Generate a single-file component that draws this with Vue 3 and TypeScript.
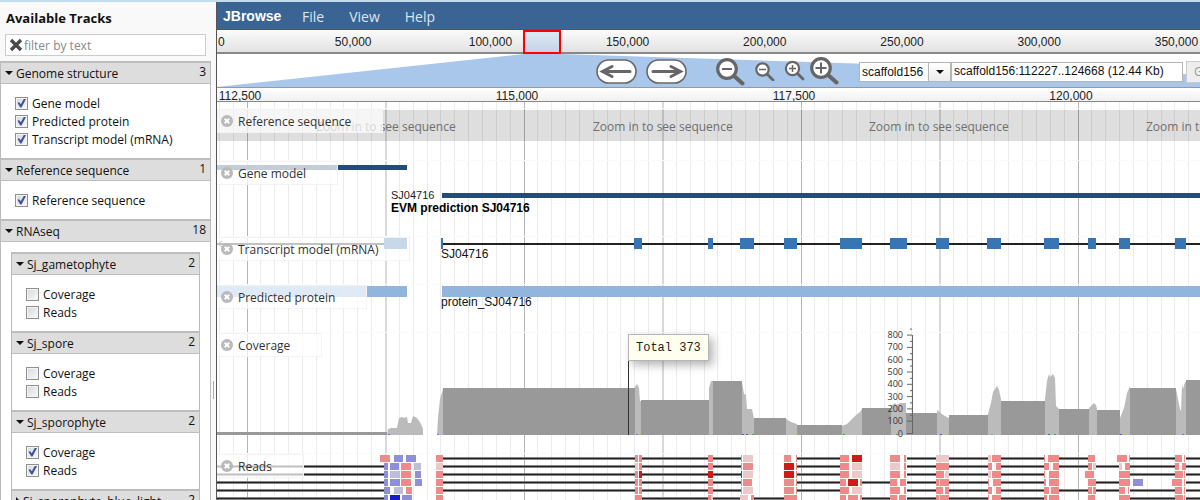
<script setup lang="ts">
import { reactive, ref } from 'vue'

interface TrackItem { name: string; on: boolean }
interface Category { name: string; count: number; open: boolean; items: TrackItem[]; children: Category[] }

const cat = (name: string, count: number, items: TrackItem[], children: Category[] = [], open = true): Category =>
  ({ name, count, open, items, children })

const categories = reactive<Category[]>([
  cat('Genome structure', 3, [
    { name: 'Gene model', on: true },
    { name: 'Predicted protein', on: true },
    { name: 'Transcript model (mRNA)', on: true },
  ]),
  cat('Reference sequence', 1, [{ name: 'Reference sequence', on: true }]),
  cat('RNAseq', 18, [], [
    cat('Sj_gametophyte', 2, [{ name: 'Coverage', on: false }, { name: 'Reads', on: false }]),
    cat('Sj_spore', 2, [{ name: 'Coverage', on: false }, { name: 'Reads', on: false }]),
    cat('Sj_sporophyte', 2, [{ name: 'Coverage', on: true }, { name: 'Reads', on: true }]),
    cat('Sj_sporophyte_blue_light', 2, [], [], false),
  ]),
])

const filterText = ref('')
const refSeq = ref('scaffold156')
const location = ref('scaffold156:112227..124668 (12.44 Kb)')

const overviewTicks = Array.from({ length: 11 }, (_, i) => ({
  x: i * 137.2 - 1,
  label: (i * 50000).toLocaleString('en-US'),
}))
const rulerTicks = Array.from({ length: 7 }, (_, i) => ({
  x: 23 + i * 277,
  label: (112500 + i * 2500).toLocaleString('en-US'),
}))

const gridLines = Array.from({ length: 130 }, (_, i) => {
  const n = i - 2
  const kind = n % 20 === 0 ? 'major' : n % 10 === 0 ? 'mid' : 'minor'
  return { x: Math.floor(30 + n * 13.85), kind }
})

// Chart coordinates are window pixels; VIEW_LEFT is where the browser pane begins.
const VIEW_LEFT = 217
const shift = `translate(${-VIEW_LEFT} 0)`

const zoomHints = [316, 593, 869, 1146, 1422]

const exons: [number, number][] = [
  [634, 642], [708, 713], [740, 754], [784, 797], [840, 862], [890, 907], [936, 949],
  [987, 1001], [1044, 1059], [1088, 1096], [1119, 1130], [1175, 1186],
]

const covDark: [number, number, number][] = [
  [217, 387, 432], [443, 635, 388], [641, 709, 400], [713, 742, 381], [754, 786, 418], [797, 842, 425],
  [862, 891, 408], [906, 937, 413], [949, 988, 415], [1001, 1045, 401], [1059, 1089, 409],
  [1097, 1120, 410], [1130, 1176, 388], [1186, 1640, 380],
]
const covLight = [
  '387,434 388,428 391,427 397,427 399,417 402,416 404,417 407,416 408,422 411,422 413,415 417,417 421,423 423,428 423,434',
  '437,434 438,417 440,398 443,388 443,434',
  '635,434 635,386 637,383 639,387 640,400 641,400 641,434',
  '709,434 709,387 711,380 713,380 713,434',
  '742,434 742,381 744,393 746,394 747,408 752,408 754,418 754,434',
  '786,434 786,418 791,421 797,423 797,434',
  '842,434 842,425 847,423 855,415 860,411 862,408 862,434',
  '891,434 891,405 895,402 897,404 900,402 906,402 906,434',
  '937,434 937,409 942,413 945,415 949,417 949,434',
  '988,434 988,413 991,402 993,391 995,388 997,385 999,389 1001,398 1001,434',
  '1045,434 1045,398 1047,380 1049,373 1050,376 1053,373 1055,377 1056,405 1059,408 1059,434',
  '1089,434 1089,407 1094,402 1096,404 1097,408 1097,434',
  '1120,434 1120,417 1124,407 1127,392 1130,385 1130,434',
  '1176,434 1176,388 1180,408 1181,410 1182,383 1183,388 1185,381 1186,381 1186,434',
]
const covTop = 333
const mismatches: [number, string][] = [
  [388, '#7777dd'], [437, '#7777dd'], [636, '#7777cc'], [639, '#c8b74a'], [742, '#5555cc'], [746, '#5555cc'],
  [752, '#44aa44'], [796, '#c8b74a'], [843, '#44aa44'], [896, '#44aa44'], [940, '#5555cc'], [947, '#c8b74a'],
  [991, '#77bb77'], [1048, '#5555cc'], [1054, '#44aa44'], [1120, '#5555cc'], [1124, '#c8b74a'], [1182, '#7777cc'],
]
const axis = Array.from({ length: 9 }, (_, i) => ({ y: 100.5 - i * 12.3, label: i * 100 }))

// l = splice line, r/k/d = red, pale and strong reads, b/v/n = blue, pale and strong reads.
const colors: Record<string, string> = {
  r: '#ec8b8b', k: '#ecc8c8', d: '#d11919', b: '#8f8fd8', v: '#bebed8', n: '#1a1ad1',
}
const rowSpecs = [
  'l443-635 l642-708 l713-741 l797-840 l907-936 l949-988 l1001-1044 l1059-1088 l1130-1175 l1186-1640 r380-390 b394-403 b406-416 r436-443 r635-638 r639-642 r708-713 r741-742 k743-753 r784-791 r796-797 r840-849 d852-862 r890-900 r904-906 k936-949 k988-991 r992-1001 r1044-1045 r1048-1059 r1088-1095 r1117-1127 r1129-1130 r1175-1182 r1184-1185',
  'l217-384 l443-635 l642-708 l713-741 l797-840 l907-936 l949-988 l1001-1044 l1059-1088 l1096-1119 l1130-1175 l1186-1640 b384-388 b390-399 r401-411 v414-421 k436-443 k635-638 r639-642 r708-713 r741-742 r743-753 d784-794 r796-797 r840-849 k852-862 k890-900 r904-906 r936-949 r988-992 r996-1001 r1044-1049 r1053-1059 r1088-1092 k1093-1096 k1119-1122 r1125-1130 r1175-1179 r1182-1186',
  'l217-384 l443-635 l642-708 l713-741 l797-840 l907-936 l949-988 l1001-1044 l1130-1175 l1186-1640 b384-388 v390-400 r401-411 b415-421 r436-443 r635-638 d639-642 d708-713 d741-742 k743-753 d784-794 r796-797 r840-849 k852-862 r890-900 r904-906 r936-944 k945-949 k988-991 r992-1001 r1044-1045 r1049-1059 r1085-1094 r1119-1130 r1175-1183 r1184-1185',
  'l217-384 l443-635 l642-708 l713-741 l797-840 l862-890 l907-936 l949-988 l1001-1044 l1096-1119 l1186-1640 b384-388 b390-400 r401-411 b415-422 r436-443 r635-638 r639-642 r708-713 r741-742 r743-752 r784-794 r796-797 r840-846 d848-858 r860-862 r890-897 r900-906 r936-939 r940-949 r988-989 r993-1001 r1044-1046 r1049-1059 r1088-1096 r1119-1130 b1133-1143 r1172-1182 r1184-1185',
  'l217-384 l443-635 l642-708 l713-741 l797-840 l907-936 l949-988 l1001-1044 l1059-1088 l1096-1119 l1130-1175 l1186-1640 b384-390 v394-403 r406-412 r436-443 r635-638 r639-642 r708-713 r741-742 k743-753 r784-794 r796-797 r840-849 k852-862 r890-900 r904-906 r936-943 r945-949 r988-992 r996-1001 r1044-1049 r1051-1059 r1088-1092 r1093-1096 r1119-1125 r1128-1129 r1175-1182 r1184-1185',
  'l217-384 l642-708 l713-741 l754-784 l862-890 l907-936 l949-988 l1001-1044 l1130-1175 l1186-1640 b384-388 n390-400 b402-412 r436-443 r635-642 r708-711 k711-713 k740-748 r751-754 r784-797 r840-846 r848-858 r860-862 r890-897 r899-906 r936-939 r940-949 r988-989 r992-1001 r1044-1047 r1049-1059 r1088-1095 r1119-1130 r1175-1183 r1184-1185',
]
const readRows = rowSpecs.map((spec, i) => {
  const parts = spec.split(' ').map((p) => {
    const [a, b] = p.slice(1).split('-').map(Number)
    return { kind: p[0], x: a, w: b - a }
  })
  return {
    y: 1 + i * 8,
    lines: parts.filter((p) => p.kind === 'l'),
    reads: parts.filter((p) => p.kind !== 'l'),
  }
})
</script>

<template>
  <div class="app">
    <aside class="sidebar">
      <h1>Available Tracks</h1>
      <label class="filter">
        <svg width="14" height="14" viewBox="0 0 14 14" aria-hidden="true">
          <path d="M2 2 L12 12 M12 2 L2 12" stroke="#4b4b4b" stroke-width="3.4" />
        </svg>
        <input v-model="filterText" type="text" placeholder="filter by text" aria-label="filter by text" />
      </label>
      <div class="tree">
        <section v-for="c in categories" :key="c.name" class="category">
          <button class="cat-head" type="button" @click="c.open = !c.open">
            <span class="arrow" :class="{ closed: !c.open }"></span>
            <span class="cat-name">{{ c.name }}</span>
            <span class="count">{{ c.count }}</span>
          </button>
          <div v-if="c.open" class="cat-body">
            <label v-for="t in c.items" :key="t.name" class="item">
              <input v-model="t.on" type="checkbox" />{{ t.name }}
            </label>
            <section v-for="s in c.children" :key="s.name" class="category sub">
              <button class="cat-head" type="button" @click="s.open = !s.open">
                <span class="arrow" :class="{ closed: !s.open }"></span>
                <span class="cat-name">{{ s.name }}</span>
                <span class="count">{{ s.count }}</span>
              </button>
              <div v-if="s.open" class="cat-body">
                <label v-for="t in s.items" :key="t.name" class="item">
                  <input v-model="t.on" type="checkbox" />{{ t.name }}
                </label>
              </div>
            </section>
          </div>
        </section>
      </div>
    </aside>
    <div class="splitter"><span class="grip"></span></div>

    <main class="view">
      <nav class="menu">
        <a href="#" class="brand">JBrowse</a>
        <button type="button">File</button>
        <button type="button">View</button>
        <button type="button">Help</button>
      </nav>

      <div class="overview">
        <svg width="100%" height="23">
          <text v-for="(t, i) in overviewTicks" :key="t.label" :x="i === 0 ? 1 : t.x" y="16"
            :text-anchor="i === 0 ? 'start' : 'middle'">{{ t.label }}</text>
        </svg>
        <div class="region"></div>
      </div>

      <div class="nav">
        <svg class="trapezoid" width="100%" height="33" aria-hidden="true">
          <polygon points="0,33 307,0 344,0 1375,33" fill="#a9c6eb" />
        </svg>
        <div class="controls">
          <button type="button" class="pan" aria-label="Pan left">
            <svg width="41" height="25" viewBox="0 0 41 25">
              <rect x="1" y="1" width="39" height="23" rx="11.5" fill="#fff" stroke="#686868" stroke-width="1.6" />
              <path d="M34 12.5 H8 M16 7.5 L6.5 12.5 L16 17.5" fill="none" stroke="#666" stroke-width="3" stroke-linecap="round" />
            </svg>
          </button>
          <button type="button" class="pan" aria-label="Pan right">
            <svg width="41" height="25" viewBox="0 0 41 25">
              <rect x="1" y="1" width="39" height="23" rx="11.5" fill="#fff" stroke="#686868" stroke-width="1.6" />
              <path d="M7 12.5 H33 M25 7.5 L34.5 12.5 L25 17.5" fill="none" stroke="#666" stroke-width="3" stroke-linecap="round" />
            </svg>
          </button>
          <button type="button" class="far-out" aria-label="Zoom out more">
            <svg width="30" height="29" viewBox="0 0 30 29">
              <path d="M18 18 L27.5 26.5" stroke="#666" stroke-width="4" stroke-linecap="round" />
              <circle cx="12" cy="12" r="9.3" fill="#fff" stroke="#666" stroke-width="3.2" />
              <path d="M7 12 H17" stroke="#666" stroke-width="2" />
            </svg>
          </button>
          <button type="button" class="out" aria-label="Zoom out">
            <svg width="21" height="19" viewBox="0 0 21 19">
              <path d="M13 12 L19 18" stroke="#666" stroke-width="2.8" stroke-linecap="round" />
              <circle cx="8.5" cy="7.5" r="6.2" fill="#fff" stroke="#666" stroke-width="2.2" />
              <path d="M5 7.5 H12" stroke="#666" stroke-width="1.5" />
            </svg>
          </button>
          <button type="button" class="in" aria-label="Zoom in">
            <svg width="21" height="23" viewBox="0 0 21 23">
              <path d="M13 13 L19 19" stroke="#666" stroke-width="2.8" stroke-linecap="round" />
              <circle cx="8.5" cy="8.5" r="6.6" fill="#fff" stroke="#666" stroke-width="2.2" />
              <path d="M5 8.5 H12 M8.5 5 V12" stroke="#666" stroke-width="1.5" />
            </svg>
          </button>
          <button type="button" aria-label="Zoom in more">
            <svg width="30" height="31" viewBox="0 0 30 31">
              <path d="M18 18 L27.5 26.5" stroke="#666" stroke-width="4" stroke-linecap="round" />
              <circle cx="12" cy="12" r="9.3" fill="#fff" stroke="#666" stroke-width="3.2" />
              <path d="M6.5 12 H17.5 M12 6.5 V17.5" stroke="#666" stroke-width="2" />
            </svg>
          </button>
          <span class="combo">
            <select v-model="refSeq" aria-label="Reference sequence">
              <option>scaffold156</option>
            </select>
            <span class="combo-btn"><span class="arrow"></span></span>
          </span>
          <input v-model="location" class="location" type="text" aria-label="Location" />
          <button type="button" class="go" disabled>Go</button>
        </div>
      </div>

      <div class="ruler">
        <svg width="100%" height="14">
          <text v-for="t in rulerTicks" :key="t.label" :x="t.x" y="12" text-anchor="middle">{{ t.label }}</text>
        </svg>
      </div>

      <div class="tracks">
        <svg class="grid" width="100%" height="100%" aria-hidden="true">
          <rect v-for="g in gridLines" :key="g.x" :x="g.x" y="0" :width="g.kind === 'mid' ? 2 : 1" height="100%" :class="g.kind" />
        </svg>

        <section class="track t-ref">
          <div class="track-label"><svg class="close" viewBox="0 0 12 12"><circle cx="6" cy="6" r="6" /><path d="M3.7 3.7 L8.3 8.3 M8.3 3.7 L3.7 8.3" /></svg>Reference sequence</div>
          <svg width="100%" height="100%">
            <g :transform="shift">
              <rect x="217" y="1" width="1500" height="31" fill="#000" fill-opacity="0.13" />
              <text v-for="x in zoomHints" :key="x" :x="x" y="22" class="hint">Zoom in to see sequence</text>
            </g>
          </svg>
        </section>

        <section class="track t-gene">
          <div class="track-label"><svg class="close" viewBox="0 0 12 12"><circle cx="6" cy="6" r="6" /><path d="M3.7 3.7 L8.3 8.3 M8.3 3.7 L3.7 8.3" /></svg>Gene model</div>
          <svg width="100%" height="100%">
            <g :transform="shift">
              <rect x="217" y="4" width="190" height="5" class="gene" />
              <rect x="442" y="32" width="1200" height="5" class="gene" />
              <text x="391" y="38" class="small">SJ04716</text>
              <text x="391" y="51" class="desc">EVM prediction SJ04716</text>
            </g>
          </svg>
        </section>

        <section class="track t-mrna">
          <div class="track-label"><svg class="close" viewBox="0 0 12 12"><circle cx="6" cy="6" r="6" /><path d="M3.7 3.7 L8.3 8.3 M8.3 3.7 L3.7 8.3" /></svg>Transcript model (mRNA)</div>
          <svg width="100%" height="100%">
            <g :transform="shift">
              <rect x="217" y="6" width="168" height="2" fill="#222" />
              <path d="M222 4 L218 7 L222 10" fill="none" stroke="#222" />
              <rect x="384" y="1" width="23" height="11" class="exon" />
              <rect x="442" y="6" width="1200" height="2" fill="#222" />
              <rect x="441" y="1" width="2" height="11" class="exon" />
              <rect v-for="e in exons" :key="e[0]" :x="e[0]" y="1" :width="e[1] - e[0]" height="11" class="exon" />
              <text x="441" y="21" class="feat">SJ04716</text>
            </g>
          </svg>
        </section>

        <section class="track t-protein">
          <div class="track-label"><svg class="close" viewBox="0 0 12 12"><circle cx="6" cy="6" r="6" /><path d="M3.7 3.7 L8.3 8.3 M8.3 3.7 L3.7 8.3" /></svg>Predicted protein</div>
          <svg width="100%" height="100%">
            <g :transform="shift">
              <rect x="217" y="1" width="190" height="11" class="protein" />
              <rect x="442" y="1" width="1200" height="11" class="protein" />
              <text x="441" y="21" class="feat">protein_SJ04716</text>
            </g>
          </svg>
        </section>

        <section class="track t-cov">
          <div class="track-label"><svg class="close" viewBox="0 0 12 12"><circle cx="6" cy="6" r="6" /><path d="M3.7 3.7 L8.3 8.3 M8.3 3.7 L3.7 8.3" /></svg>Coverage</div>
          <svg width="100%" height="100%">
            <g :transform="shift">
              <rect v-for="d in covDark" :key="d[0]" :x="d[0]" :y="d[2] - covTop" :width="d[1] - d[0]" :height="435 - d[2]" fill="#999" />
              <g :transform="`translate(0 ${1 - covTop})`">
                <polygon v-for="p in covLight" :key="p" :points="p" fill="#bbb" />
              </g>
              <rect v-for="m in mismatches" :key="m[0]" :x="m[0]" y="101" width="2" height="1" :fill="m[1]" />
              <path d="M912.5 2 V101" class="axis" />
              <template v-for="(a, i) in axis" :key="a.label">
                <path :d="`M907 ${a.y} H912`" class="axis" />
                <path v-if="i > 0" :d="`M910 ${a.y - 6} H912`" class="axis" />
                <text x="903" :y="a.y + 3" text-anchor="end" class="axis-text">{{ a.label }}</text>
              </template>
              <rect x="628" y="1" width="1" height="101" fill="#333" />
            </g>
          </svg>
          <div class="tooltip">Total 373</div>
        </section>

        <section class="track t-reads">
          <div class="track-label"><svg class="close" viewBox="0 0 12 12"><circle cx="6" cy="6" r="6" /><path d="M3.7 3.7 L8.3 8.3 M8.3 3.7 L3.7 8.3" /></svg>Reads</div>
          <svg width="100%" height="100%">
            <g :transform="shift">
              <g v-for="r in readRows" :key="r.y">
                <template v-for="l in r.lines" :key="l.x">
                  <rect :x="l.x" :y="r.y + 2" :width="l.w" height="3" fill="#858585" />
                  <rect :x="l.x" :y="r.y + 3" :width="l.w" height="1" fill="#222" />
                </template>
                <rect v-for="b in r.reads" :key="b.x" :x="b.x" :y="r.y" :width="b.w" height="7" :fill="colors[b.kind]" />
              </g>
            </g>
          </svg>
        </section>
      </div>
    </main>
  </div>
</template>

<style>
html, body { margin: 0; }
body { overflow: hidden; }
</style>

<style scoped>
.app {
  display: flex;
  height: 100vh;
  box-sizing: border-box;
  border-top: 2px solid #c3dcee;
  overflow: hidden;
  background: #f9f9f9;
  font-family: "Open Sans", "Noto Sans", sans-serif;
  font-size: 12px;
  color: #111;
}
button { border: 0; background: none; padding: 0; font: inherit; color: inherit; }

.sidebar { flex: 0 0 211px; display: flex; flex-direction: column; min-height: 0; }
h1 { margin: 6px 6px 5px; font-size: 13px; line-height: 21px; font-weight: 700; color: #111; }
.filter {
  display: flex; align-items: center; gap: 1px; box-sizing: border-box; flex: none;
  margin: 0 5px 5px; padding-left: 3px; height: 22px;
  border: 1px solid #c8ccd4; background: #fff;
}
.filter input { flex: 1; min-width: 0; border: 0; outline: 0; padding: 0; background: none; font: inherit; }
.filter input::placeholder { color: #888; }
.tree {
  flex: 1 0 0; min-height: 0; box-sizing: border-box; overflow: hidden;
  border-right: 1px solid #bbb; border-left: 1px solid #bbb; background: #fff;
}
.cat-head {
  display: flex; align-items: center; width: 100%; height: 23px; box-sizing: border-box;
  border-top: 2px solid #bdbdbd; border-bottom: 1px solid #bdbdbd;
  background: #ddd; padding: 0 4px; text-align: left;
}
.arrow { border: 4px solid transparent; border-top-color: #111; border-bottom-width: 0; }
.arrow.closed { border: 4px solid transparent; border-left-color: #111; border-right-width: 0; }
.cat-name { flex: 1; margin-left: 3px; white-space: nowrap; overflow: hidden; }
.count { align-self: flex-start; line-height: 18px; }
.cat-body { padding: 10px; }
.item { display: flex; align-items: center; gap: 4px; height: 18px; padding-left: 4px; white-space: nowrap; }
.item input {
  appearance: none; flex: none; margin: 0; width: 13px; height: 13px; box-sizing: border-box;
  border: 1px solid #8e8f8f; background: linear-gradient(135deg, #d4d7dc, #fafafa);
  box-shadow: inset 0 0 0 1px #f4f4f4; display: grid; place-items: center;
}
.item input:checked::before {
  content: ""; width: 9px; height: 9px; background: #41549b;
  clip-path: polygon(5% 48%, 25% 42%, 42% 65%, 78% 0, 100% 5%, 50% 100%, 36% 100%);
}
.sub { border-left: 1px solid #bbb; border-right: 1px solid #bbb; }

.splitter { flex: 0 0 5px; display: flex; align-items: center; border-right: 1px solid #555; background: #f9f9f9; }
.grip { width: 1px; height: 18px; margin: 278px 0 0 2px; background: #aaa; }

.view { flex: 1; min-width: 0; display: flex; flex-direction: column; overflow: hidden; background: #fff; }
.menu { display: flex; align-items: center; height: 27px; background: #396494; color: #dde6f0; font-size: 14px; border-bottom: 1px solid #555; }
.menu .brand { width: 79px; padding-left: 6px; color: #fff; font: 700 14px "Liberation Sans", Arial, sans-serif; text-decoration: none; }
.menu button { padding-top: 2px; margin-right: 25px; }

.overview {
  position: relative; height: 22px; border-bottom: 2px solid #888;
  background: linear-gradient(#fbfbfb, #e2e2e2);
}
.overview svg, .ruler svg { display: block; }
.overview text, .ruler text { font: 12px "Liberation Sans", Arial, sans-serif; fill: #222; }
.region {
  position: absolute; left: 306px; top: 0; width: 34px; height: 20px;
  border: 2px solid #f00; background: linear-gradient(#dce8f5, #c4d3e6);
}
.nav { position: relative; height: 33px; overflow: hidden; background: #fff; }
.trapezoid { position: absolute; inset: 0; }
.controls { position: relative; display: flex; align-items: center; height: 35px; padding-left: 379px; }
.controls > button { flex: none; }
.controls button svg { display: block; }
.pan { margin-right: 9px; }
.far-out { margin-left: 19px; margin-right: 9px; }
.out { margin-right: 9px; }
.in { margin-right: 4px; }
.combo { position: relative; flex: none; display: flex; margin-left: 20px; width: 92px; height: 20px; box-sizing: border-box; border: 1px solid #b5b5b5; }
.combo select {
  appearance: none; width: 100%; border: 0; padding: 0 0 0 2px; background: #fff;
  font: 12px "Liberation Sans", Arial, sans-serif; color: #111;
}
.combo-btn {
  position: absolute; right: 0; top: 0; bottom: 0; width: 21px; display: grid; place-items: center;
  border-left: 1px solid #b5b5b5; background: linear-gradient(#fff, #ececec); pointer-events: none;
}
.location {
  flex: none; width: 232px; height: 20px; box-sizing: border-box; border: 1px solid #b5b5b5; padding: 0 2px 1px;
  font: 12px "Liberation Sans", Arial, sans-serif; color: #111; background: #fff;
}
.controls .go { margin-left: 3px; height: 22px; padding: 0 7px; border: 1px solid #ccc; background: #eee; color: #999; }

.ruler { height: 13px; border-top: 1px solid #999; border-bottom: 1px solid #888; background: linear-gradient(#fff, #f0f0f0); }

.tracks { position: relative; flex: 1; min-height: 0; display: flex; flex-direction: column; padding-top: 7px; overflow: hidden; }
.grid { position: absolute; inset: 0; }
.minor { fill: #ebebeb; }
.mid { fill: #d9d9d9; }
.major { fill: #b4b4b4; }
.track { position: relative; flex: none; box-shadow: 0 -1px 0 #fafafa; }
.track > svg { display: block; overflow: visible; }
.t-ref { height: 52px; }
.t-gene { height: 76px; }
.t-mrna { height: 48px; }
.t-protein { height: 48px; }
.t-cov { height: 121px; }
.t-reads { height: 60px; }
.track-label {
  position: absolute; z-index: 1; left: 0; top: 0; height: 24px; box-sizing: border-box;
  display: flex; align-items: center; gap: 5px; padding: 0 31px 0 4px;
  background: rgba(255, 255, 255, 0.72); border: 1px solid #f3f3f3; border-left: 0; color: #333; white-space: nowrap;
}
.close { width: 12px; height: 12px; }
.close circle { fill: #b9b9b9; }
.close path { stroke: #fff; stroke-width: 2; }
.hint { font-size: 12px; fill: #6f6f6f; }
.gene { fill: #244d75; }
.exon { fill: #3875b5; }
.protein { fill: #91b5dd; }
.small { font: 11px "Liberation Sans", Arial, sans-serif; fill: #222; }
.feat { font: 12px "Liberation Sans", Arial, sans-serif; fill: #111; }
.desc { font: 700 12px "Liberation Sans", Arial, sans-serif; fill: #000; }
.axis { stroke: #666; fill: none; }
.axis-text { font-size: 9px; fill: #333; }
.tooltip {
  position: absolute; z-index: 2; left: 411px; top: 1px; padding: 6px 7px 4px; line-height: 15px;
  border: 1px solid #b5b5b5; background: #ffffef; box-shadow: 4px 4px 10px rgba(0, 0, 0, 0.3);
  font-family: "Liberation Mono", "Courier New", monospace; font-size: 12px; white-space: pre; color: #222;
}
</style>
